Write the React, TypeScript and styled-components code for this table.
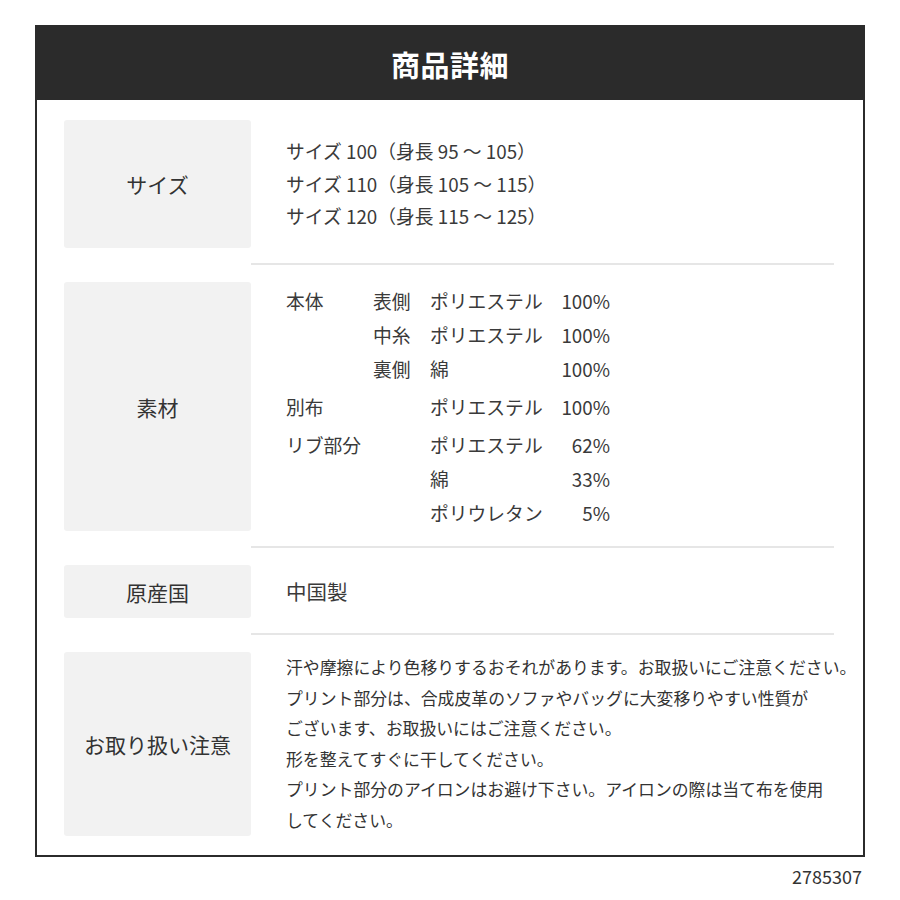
import styled, { createGlobalStyle } from "styled-components";

const GlobalStyle = createGlobalStyle`
  html, body {
    margin: 0;
    padding: 0;
    background: #ffffff;
  }
  body {
    font-family: "Noto Sans CJK JP", "Noto Sans", sans-serif;
    color: #333333;
  }
`;

const Page = styled.div`
  width: 900px;
  padding: 25px 0 0 35px;
  box-sizing: border-box;
`;

const Frame = styled.div`
  width: 830px;
  border: 2px solid #2b2b2b;
  box-sizing: border-box;
  background: #ffffff;
`;

const Header = styled.div`
  height: 73px;
  background: #2b2b2b;
  display: flex;
  align-items: center;
  justify-content: center;
`;

const HeaderTitle = styled.h1`
  margin: 0;
  font-size: 29px;
  font-weight: 700;
  color: #ffffff;
  letter-spacing: 0.5px;
`;

const Body = styled.div`
  padding: 20px 15px 19px 27px;
`;

const Row = styled.div`
  display: grid;
  grid-template-columns: 187px 1fr;
  column-gap: 35px;
  align-items: stretch;
`;

const Label = styled.div<{ $minH?: number }>`
  min-height: ${(p) => (p.$minH ? `${p.$minH}px` : "auto")};
  background: #f2f2f2;
  border-radius: 3px;
  display: flex;
  align-items: center;
  justify-content: center;
  font-size: 21px;
  color: #333333;
`;

const Content = styled.div`
  display: flex;
  flex-direction: column;
  justify-content: center;
  font-size: 18.8px;
  color: #3a3a3a;
`;

const Separator = styled.div`
  height: 2px;
  background: #e6e6e6;
  margin: 15px 14px 17px 187px;
`;

const SizeLine = styled.div`
  line-height: 32.5px;
  white-space: nowrap;
`;

const MatLine = styled.div<{ $gapTop?: boolean }>`
  display: grid;
  grid-template-columns: 87px 57px 118px 62px;
  line-height: 34px;
  margin-top: ${(p) => (p.$gapTop ? "4px" : "0")};
  white-space: nowrap;
`;

const Pct = styled.span`
  text-align: right;
`;

const OriginText = styled.div`
  font-size: 20.5px;
  line-height: 53px;
`;

const CareLine = styled.div`
  font-size: 16.85px;
  line-height: 30.6px;
  white-space: nowrap;
  color: #333333;
`;

const Code = styled.div`
  width: 827px;
  text-align: right;
  font-size: 18px;
  color: #333333;
  margin-top: 6px;
`;

const sizes = [
  "サイズ 100（身長 95 ～ 105）",
  "サイズ 110（身長 105 ～ 115）",
  "サイズ 120（身長 115 ～ 125）",
];

const materials = [
  { part: "本体", side: "表側", name: "ポリエステル", pct: "100%", gap: false },
  { part: "", side: "中糸", name: "ポリエステル", pct: "100%", gap: false },
  { part: "", side: "裏側", name: "綿", pct: "100%", gap: false },
  { part: "別布", side: "", name: "ポリエステル", pct: "100%", gap: true },
  { part: "リブ部分", side: "", name: "ポリエステル", pct: "62%", gap: true },
  { part: "", side: "", name: "綿", pct: "33%", gap: false },
  { part: "", side: "", name: "ポリウレタン", pct: "5%", gap: false },
];

const care = [
  "汗や摩擦により色移りするおそれがあります。お取扱いにご注意ください。",
  "プリント部分は、合成皮革のソファやバッグに大変移りやすい性質が",
  "ございます、お取扱いにはご注意ください。",
  "形を整えてすぐに干してください。",
  "プリント部分のアイロンはお避け下さい。アイロンの際は当て布を使用",
  "してください。",
];

export default function App() {
  return (
    <Page>
      <GlobalStyle />
      <Frame>
        <Header>
          <HeaderTitle>商品詳細</HeaderTitle>
        </Header>
        <Body>
          <Row>
            <Label $minH={128}>サイズ</Label>
            <Content>
              {sizes.map((s) => (
                <SizeLine key={s}>{s}</SizeLine>
              ))}
            </Content>
          </Row>
          <Separator />
          <Row>
            <Label $minH={249}>素材</Label>
            <Content>
              {materials.map((m, i) => (
                <MatLine key={i} $gapTop={m.gap}>
                  <span>{m.part}</span>
                  <span>{m.side}</span>
                  <span>{m.name}</span>
                  <Pct>{m.pct}</Pct>
                </MatLine>
              ))}
            </Content>
          </Row>
          <Separator />
          <Row>
            <Label $minH={53}>原産国</Label>
            <Content>
              <OriginText>中国製</OriginText>
            </Content>
          </Row>
          <Separator />
          <Row>
            <Label $minH={183}>お取り扱い注意</Label>
            <Content>
              {care.map((c) => (
                <CareLine key={c}>{c}</CareLine>
              ))}
            </Content>
          </Row>
        </Body>
      </Frame>
      <Code>2785307</Code>
    </Page>
  );
}
